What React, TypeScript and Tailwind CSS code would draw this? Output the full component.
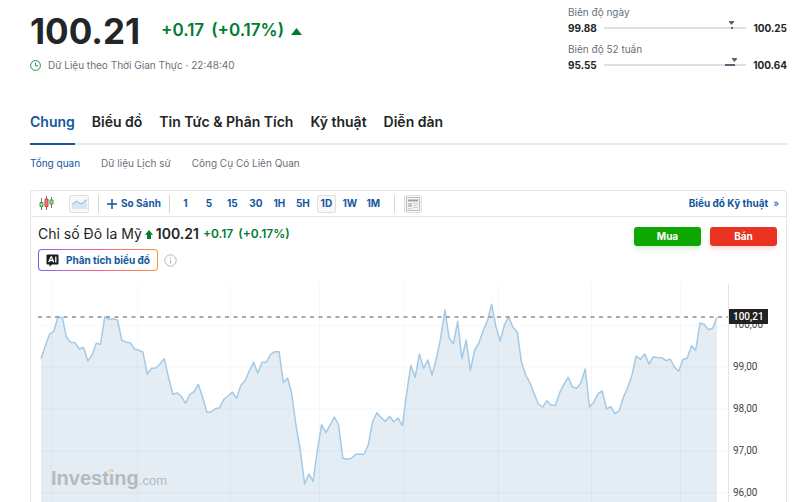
import type { ReactNode } from "react";

const tabs = ["Chung", "Biểu đồ", "Tin Tức & Phân Tích", "Kỹ thuật", "Diễn đàn"];
const subTabs = ["Tổng quan", "Dữ liệu Lịch sử", "Công Cụ Có Liên Quan"];
const intervals = ["1", "5", "15", "30", "1H", "5H", "1D", "1W", "1M"];
const axisLabels = ["100,00", "99,00", "98,00", "97,00", "96,00"];

// vertical position of every sample in the plot, top = 0
const samples = [
  74.5, 62, 50.3, 47.3, 33, 33.7, 53.3, 58.3, 58.7, 65, 63.3, 77, 71.3, 59.3, 60.3, 32.7, 35.3, 34.7, 36, 56,
  58.3, 58.7, 65, 66.3, 68.3, 90, 84.3, 84, 80, 74.7, 93.3, 110.3, 109, 112.3, 119.3, 110.3, 107.7, 100.3, 113.3, 128,
  128, 124.7, 123.7, 115.3, 112, 108, 114.3, 101.3, 96.7, 87, 78.3, 89.3, 78.3, 78.3, 70.3, 67.7, 67.7, 98.7, 94, 110,
  142, 166, 200, 190, 197.3, 166, 140.7, 148.7, 141, 133, 141, 174.3, 175.3, 174.3, 170.3, 170.3, 170.3, 160.3, 137.7, 128.7,
  133.7, 137.3, 132.3, 137.7, 134, 141.7, 109.3, 81.3, 93.3, 70, 84.3, 76, 91, 74.3, 54.3, 26, 54.3, 59.7, 37.3, 74.7,
  56, 86.3, 66, 59, 46.7, 36.7, 20.3, 42.7, 57, 41, 32.7, 43.3, 47.7, 77.7, 91, 98.7, 109.7, 120, 123, 116.7,
  121.3, 121.3, 108.7, 100.3, 93.3, 103, 104.3, 99, 85, 123, 118.3, 109.7, 107, 124.7, 122.7, 129.7, 126.7, 113, 103.7, 91,
  72, 75.3, 70, 80, 73, 73.5, 73.7, 76.7, 75, 83, 87.3, 75.3, 74.3, 61.7, 66.3, 39, 40.3, 45.7, 44.3, 33.3,
];

const gridX = [13, 99, 192, 281, 366, 460, 553, 642];
const gridY = [42, 83, 125, 167, 209];

export default function App() {
  return (
    <main className="overflow-hidden bg-white pl-[30px] pr-[13px] font-['Inter',sans-serif] text-[#232526]">
      <header className="flex items-start justify-between pt-1">
        <div className="pt-1">
          <div className="flex items-center">
            <h1 className="text-[35px] leading-[46px] font-bold">100.21</h1>
            <div className="ml-[21px] flex gap-[7px] text-[17px] font-semibold text-[#007c32]">
              <span>+0.17</span>
              <span>(+0.17%)</span>
            </div>
            <svg className="ml-[7px] h-[7px] w-[11px] fill-[#007c32]" viewBox="0 0 11 7">
              <path d="M5.5 0 11 7H0z" />
            </svg>
          </div>
          <div className="mt-[3px] flex items-center gap-[7px] text-[10px] leading-4 text-[#6a707c]">
            <svg className="size-[11px] fill-none stroke-[#1d8f49]" viewBox="0 0 11 11">
              <circle cx="5.5" cy="5.5" r="4.9" />
              <path d="M5.5 2.7v3.2h2.7" />
            </svg>
            <span>Dữ Liệu theo Thời Gian Thực · 22:48:40</span>
          </div>
        </div>
        <div className="flex w-[219px] flex-col gap-[5px] text-[10px] leading-4">
          <Range label="Biên độ ngày" low="99.88" high="100.25">
            <span className="absolute left-[89%] h-[2px] w-[2px] bg-[#5b616e]" />
            <Marker className="left-[88%]" />
          </Range>
          <Range label="Biên độ 52 tuần" low="95.55" high="100.64">
            <span className="absolute left-[85%] h-[2px] w-[10px] bg-[#5b616e]" />
            <Marker className="left-[90%]" />
          </Range>
        </div>
      </header>

      <nav className="mt-[39px] flex gap-[17px] border-b-2 border-[#e6e9eb] text-sm leading-5 font-semibold">
        {tabs.map((tab, i) => (
          <a
            key={tab}
            href="#"
            className={i === 0 ? "-mb-[2px] border-b-2 border-[#1256a0] pb-[11px] text-[#1256a0]" : "pb-[11px]"}
          >
            {tab}
          </a>
        ))}
      </nav>

      <nav className="mt-[10px] flex gap-[21px] text-[10px] leading-4 text-[#6a707c]">
        {subTabs.map((tab, i) => (
          <a key={tab} href="#" className={i === 0 ? "text-[#1256a0]" : ""}>
            {tab}
          </a>
        ))}
      </nav>

      <section className="mt-[19px] rounded-t-[3px] border border-b-0 border-[#e6e6e6]">
        <Toolbar />

        <div className="flex items-start justify-between pt-[7px] pr-[9px] pl-[7px]">
          <div>
            <div className="flex items-center gap-[3px] leading-5">
              <h2 className="text-sm leading-5">Chỉ số Đô la Mỹ</h2>
              <svg className="h-[9px] w-[8px] fill-[#007c32]" viewBox="0 0 8 9">
                <path d="M4 0 8 4.7H6V9H2V4.7H0z" />
              </svg>
              <strong className="text-sm leading-5 font-semibold">100.21</strong>
              <div className="ml-px flex gap-[5px] text-xs leading-5 font-semibold text-[#007c32]">
                <span>+0.17</span>
                <span>(+0.17%)</span>
              </div>
            </div>
            <div className="mt-[5px] flex items-center gap-[6px]">
              <span className="rounded bg-linear-to-r from-[#7b5cff] via-[#ff5a8c] to-[#ff8f2e] p-px">
                <button className="flex h-5 items-center gap-[7px] rounded-[3px] bg-white px-[7px] text-[10px] font-bold text-[#1256a0]">
                  <svg className="h-[13px] w-[13px]" viewBox="0 0 13 13">
                    <path d="M1.5.5h10a1 1 0 0 1 1 1v8a1 1 0 0 1-1 1H6L3.5 12.8v-2.3h-2a1 1 0 0 1-1-1v-8a1 1 0 0 1 1-1z" fill="#181c21" />
                    <path d="M2.7 8.3 5 2.8h.5l2.3 5.5M3.8 6.5h3M9.8 2.5v6" fill="none" stroke="#fff" strokeWidth="1.3" />
                  </svg>
                  Phân tích biểu đồ
                </button>
              </span>
              <svg className="size-[13px] fill-none stroke-[#b5b8bd]" viewBox="0 0 13 13">
                <circle cx="6.5" cy="6.5" r="5.7" />
                <path d="M6.5 5.7v3.8M6.5 3.3v1.3" />
              </svg>
            </div>
          </div>
          <div className="flex gap-[9px] pt-[3px] text-[10px] font-bold text-white">
            <button className="h-[19px] w-[67px] rounded-[3px] bg-[#0ea600] shadow-md shadow-[#0ea60022]">Mua</button>
            <button className="h-[19px] w-[67px] rounded-[3px] bg-[#ea3323] shadow-md shadow-[#ea332322]">Bán</button>
          </div>
        </div>

        <PriceChart />
      </section>
    </main>
  );
}

function Range({ label, low, high, children }: { label: string; low: string; high: string; children: ReactNode }) {
  return (
    <div>
      <div className="text-[#6a707c]">{label}</div>
      <div className="flex items-center leading-4 font-bold">
        <span>{low}</span>
        <div className="relative mx-[7px] h-[2px] flex-1 bg-[#dcdfe4]">{children}</div>
        <span>{high}</span>
      </div>
    </div>
  );
}

function Marker({ className }: { className: string }) {
  return (
    <svg className={`absolute bottom-[4px] h-[4px] w-[5px] fill-[#5b616e] ${className}`} viewBox="0 0 5 4">
      <path d="M0 0h5v1L2.5 4 0 1z" />
    </svg>
  );
}

function Toolbar() {
  return (
    <div className="flex h-[26px] items-center border-b border-[#e6e6e6] pr-[7px] pl-2 text-[10px] font-bold text-[#1256a0]">
      <button aria-label="Candles">
        <svg className="h-[15px] w-4" viewBox="0 0 16 15" fill="none">
          <path d="M2.5 2v12M7.5 0v14M12.5 1v11" stroke="#777" />
          <path d="M1 6.5h3v4H1z" fill="#a5e0a5" stroke="#3c9a40" />
          <path d="M6 3h3v7.500H6z" fill="#f47373" stroke="#d84040" />
          <path d="M11 4h3v4h-3z" fill="#a5e0a5" stroke="#3c9a40" />
        </svg>
      </button>
      <button
        aria-label="Area"
        className="ml-[14px] flex h-[18px] w-5 items-center justify-center rounded-[2px] border border-[#e0e0e0] bg-[#f8f8f8]"
      >
        <svg className="h-[12px] w-[15px]" viewBox="0 0 15 12" fill="none">
          <path d="M0 6.500 4.500 3l4.500 3L15 1.500V11H0z" fill="#d9e5f3" />
          <path d="M0 6.500 4.500 3l4.500 3L15 1.500" stroke="#8eb0d6" />
        </svg>
      </button>
      <span className="ml-[9px] h-[18px] w-px bg-[#d4d4d4]" />
      <button className="ml-2 flex items-center gap-1">
        <svg className="size-[10px] stroke-[#1256a0]" viewBox="0 0 10 10" strokeWidth="1.5">
          <path d="M5 0v10M0 5h10" />
        </svg>
        So Sánh
      </button>
      <span className="ml-2 h-[18px] w-px bg-[#d4d4d4]" />
      <div className="ml-[6px] flex w-[207px] justify-between">
        {intervals.map((item) => (
          <button
            key={item}
            className={`h-[18px] w-[19px] rounded-[2px] border ${
              item === "1D" ? "border-[#e0e0e0] bg-[#f8f8f8]" : "border-transparent"
            }`}
          >
            {item}
          </button>
        ))}
      </div>
      <span className="ml-[11px] h-[18px] w-px bg-[#d4d4d4]" />
      <button
        aria-label="News"
        className="ml-[9px] flex h-[18px] w-[18px] items-center justify-center rounded-[2px] border border-[#e0e0e0] bg-[#f8f8f8]"
      >
        <svg className="size-[14px]" viewBox="0 0 14 14" fill="none">
          <path d="M.5.5h13v13H.5z" fill="#f5f5f5" stroke="#bdbdbd" />
          <path d="M2 3.500h10" stroke="#a0a0a0" strokeWidth="2" />
          <path d="M2 6h4v4H2z" fill="#c4c4c4" />
          <path d="M7 6.500h5M7 8.500h4M7 10.500h5M2 11.500h4" stroke="#cfcfcf" />
        </svg>
      </button>
      <a href="#" className="ml-auto flex gap-[5px]">
        Biểu đồ Kỹ thuật <span className="font-normal">»</span>
      </a>
    </div>
  );
}

function PriceChart() {
  const step = 676 / (samples.length - 1);
  const line = samples.map((y, i) => `${i === 0 ? "M" : "L"}${(3 + i * step).toFixed(1)} ${y}`).join("");

  return (
    <div className="mt-[13px] flex h-[218px] pl-[7px]">
      <div className="relative min-w-0 flex-1 border-r border-[#e4e4e4]">
        <svg className="block h-full w-full" viewBox="0 0 690 218" preserveAspectRatio="none" fill="none">
          <path d={`${line}V218H3z`} fill="#e4edf4" />
          {gridX.map((x) => (
            <path key={x} d={`M${x}.5 0v218`} stroke="#000" strokeOpacity="0.03" />
          ))}
          {gridY.map((y) => (
            <path key={y} d={`M0 ${y}h690`} stroke="#000" strokeOpacity="0.03" />
          ))}
          <path d={line} stroke="#a3cae6" strokeWidth="1.5" strokeLinejoin="round" />
          <path d="M0 33h690" stroke="#8c8c8c" strokeWidth="1.3" strokeDasharray="4 4.5" />
        </svg>
        <div className="absolute bottom-3 left-[13px] flex items-baseline font-['Liberation_Sans',sans-serif] text-[#b4bbc0]">
          <span className="text-xl leading-6 font-bold">Investing</span>
          <span className="text-[13px]">.com</span>
          <svg className="absolute top-[2px] left-[56px] h-[5px] w-[6px] fill-[#e8d8b4]" viewBox="0 0 6 5">
            <path d="M1 2 6 0 5 4 1 5z" />
          </svg>
        </div>
      </div>
      <div className="relative w-[57px] pt-[31px] pl-1 font-['Roboto',sans-serif] text-[10px] text-[#444]">
        {axisLabels.map((label) => (
          <div key={label} className="h-[42px] leading-5">
            {label}
          </div>
        ))}
        <div className="absolute top-[25px] left-0 bg-[#212121] px-1 leading-[15px] font-medium text-white">100,21</div>
      </div>
    </div>
  );
}
